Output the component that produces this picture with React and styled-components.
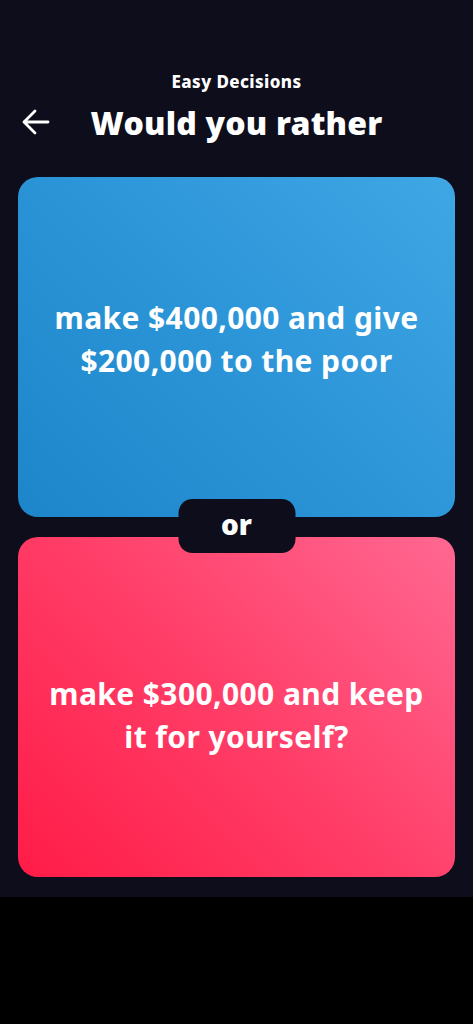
import React from 'react';
import styled, { createGlobalStyle } from 'styled-components';

const GlobalStyle = createGlobalStyle`
  body {
    margin: 0;
    background: #000;
    font-family: "Noto Sans", "Open Sans", sans-serif;
  }
`;

const Screen = styled.div`
  background: #0d0d1b;
  padding: 70px 18px 20px;
  display: flex;
  flex-direction: column;
`;

const Subtitle = styled.div`
  color: #fff;
  font-size: 17px;
  font-weight: 800;
  line-height: 24px;
  letter-spacing: 0.4px;
  text-align: center;
`;

const TitleRow = styled.div`
  display: grid;
  grid-template-columns: 48px 1fr 48px;
  align-items: center;
  height: 44px;
  margin-top: 6px;
  margin-bottom: 33px;
`;

const BackButton = styled.button`
  background: none;
  border: none;
  padding: 0 0 0 4px;
  display: flex;
  align-items: center;
  cursor: pointer;
`;

const Title = styled.h1`
  margin: 0;
  color: #fff;
  font-size: 32px;
  font-weight: 900;
  text-align: center;
  letter-spacing: 0.2px;
`;

const Choices = styled.div`
  position: relative;
  display: flex;
  flex-direction: column;
  gap: 20px;
`;

const Card = styled.button`
  height: 340px;
  border: none;
  border-radius: 20px;
  background: ${p => p.$variant === 'blue'
    ? 'linear-gradient(225deg, #40a7e5 0%, #2c95d8 50%, #1d86ca 100%)'
    : 'linear-gradient(225deg, #ff6892 0%, #ff3e68 50%, #ff1c47 100%)'};
  display: flex;
  align-items: center;
  justify-content: center;
  padding: ${p => p.$variant === 'blue' ? '0 20px 16px' : '16px 20px 0'};
  cursor: pointer;
`;

const CardText = styled.span`
  color: #fff;
  font-family: "Noto Sans", sans-serif;
  font-size: 30px;
  font-weight: 700;
  line-height: 43px;
  letter-spacing: 0.4px;
  text-align: center;
`;

const OrBadge = styled.div`
  position: absolute;
  left: 50%;
  top: 322px;
  transform: translateX(-50%);
  width: 117px;
  height: 54px;
  border-radius: 14px;
  background: #0d0d1b;
  color: #fff;
  font-size: 28px;
  font-weight: 900;
  display: flex;
  align-items: center;
  justify-content: center;
  padding-bottom: 4px;
  box-sizing: border-box;
`;

const ArrowIcon = () => (
  <svg width="28" height="26" viewBox="0 0 28 26" fill="none">
    <path d="M26 13H2M13 2L2 13L13 24" stroke="#fff" strokeWidth="2.8" strokeLinecap="round" strokeLinejoin="round" />
  </svg>
);

export default function App() {
  return (
    <>
      <GlobalStyle />
      <Screen>
        <Subtitle>Easy Decisions</Subtitle>
        <TitleRow>
          <BackButton aria-label="Back"><ArrowIcon /></BackButton>
          <Title>Would you rather</Title>
          <span />
        </TitleRow>
        <Choices>
          <Card $variant="blue">
            <CardText>make $400,000 and give<br />$200,000 to the poor</CardText>
          </Card>
          <Card $variant="red">
            <CardText>make $300,000 and keep<br />it for yourself?</CardText>
          </Card>
          <OrBadge>or</OrBadge>
        </Choices>
      </Screen>
    </>
  );
}
